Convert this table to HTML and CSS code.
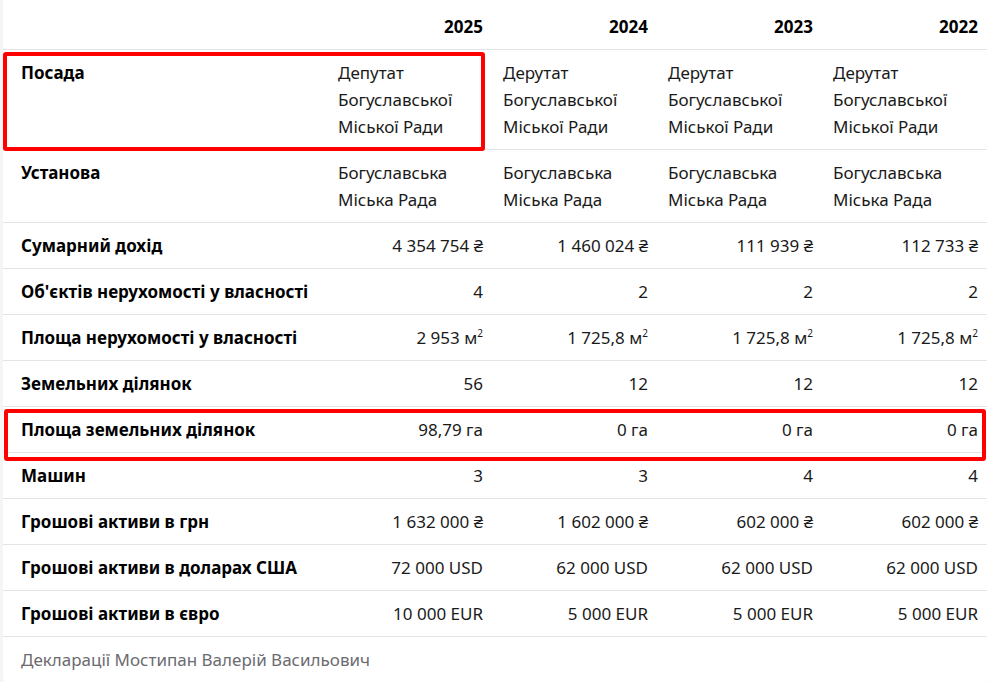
FILE: index.html
```html
<!DOCTYPE html>
<html lang="uk">
<head>
<meta charset="utf-8">
<title>Декларації</title>
<link rel="stylesheet" href="styles.css">
</head>
<body>
<div class="card">
  <table class="decl">
    <colgroup>
      <col class="c-label"><col class="c-val"><col class="c-val"><col class="c-val"><col class="c-val">
    </colgroup>
    <thead>
      <tr><th></th><th>2025</th><th>2024</th><th>2023</th><th>2022</th></tr>
    </thead>
    <tbody>
      <tr class="text-row"><th>Посада</th><td>Депутат Богуславської Міської Ради</td><td>Дерутат Богуславської Міської Ради</td><td>Дерутат Богуславської Міської Ради</td><td>Дерутат Богуславської Міської Ради</td></tr>
      <tr class="text-row"><th>Установа</th><td>Богуславська Міська Рада</td><td>Богуславська Міська Рада</td><td>Богуславська Міська Рада</td><td>Богуславська Міська Рада</td></tr>
      <tr><th>Сумарний дохід</th><td>4 354 754 ₴</td><td>1 460 024 ₴</td><td>111 939 ₴</td><td>112 733 ₴</td></tr>
      <tr><th>Об'єктів нерухомості у власності</th><td>4</td><td>2</td><td>2</td><td>2</td></tr>
      <tr><th>Площа нерухомості у власності</th><td>2 953 м<sup>2</sup></td><td>1 725,8 м<sup>2</sup></td><td>1 725,8 м<sup>2</sup></td><td>1 725,8 м<sup>2</sup></td></tr>
      <tr><th>Земельних ділянок</th><td>56</td><td>12</td><td>12</td><td>12</td></tr>
      <tr><th>Площа земельних ділянок</th><td>98,79 га</td><td>0 га</td><td>0 га</td><td>0 га</td></tr>
      <tr><th>Машин</th><td>3</td><td>3</td><td>4</td><td>4</td></tr>
      <tr><th>Грошові активи в грн</th><td>1 632 000 ₴</td><td>1 602 000 ₴</td><td>602 000 ₴</td><td>602 000 ₴</td></tr>
      <tr><th>Грошові активи в доларах США</th><td>72 000 USD</td><td>62 000 USD</td><td>62 000 USD</td><td>62 000 USD</td></tr>
      <tr><th>Грошові активи в євро</th><td>10 000 EUR</td><td>5 000 EUR</td><td>5 000 EUR</td><td>5 000 EUR</td></tr>
    </tbody>
  </table>
  <div class="caption">Декларації Мостипан Валерій Васильович</div>
</div>
<div class="mark mark-post"></div>
<div class="mark mark-land"></div>
</body>
</html>
```
FILE: styles.css
```css
html, body {
  margin: 0;
  padding: 0;
}
body {
  background: #f5f5f8;
  font-family: "Noto Sans", "Open Sans", sans-serif;
  font-size: 17px;
  color: #111;
  position: relative;
  height: 682px;
  overflow: hidden;
}
.card {
  margin-left: 3px;
  background: #fff;
  border-radius: 0 0 8px 8px;
  padding-bottom: 12px;
}
.decl {
  width: 984px;
  border-collapse: collapse;
  table-layout: fixed;
}
.c-label { width: 325px; }
.c-val { width: 165px; }
.decl th, .decl td {
  line-height: 27px;
  padding: 9px 10px;
  border-bottom: 1px solid #e3e3e8;
  vertical-align: top;
}
.decl thead th {
  padding: 13px 10px 9px;
  text-align: right;
  font-weight: 700;
  color: #000;
}
.decl tbody th {
  text-align: left;
  font-weight: 700;
  color: #000;
  padding-left: 18px;
}
.decl tbody td {
  text-align: right;
  color: #1a1a1a;
}
.decl tbody tr.text-row td {
  text-align: left;
}
.decl sup {
  font-size: 10px;
  line-height: 0;
  vertical-align: 7px;
}
.caption {
  padding: 9px 18px 0;
  line-height: 27px;
  color: #6b6b70;
}
.mark {
  position: absolute;
  border: 4px solid #ff0000;
  border-radius: 3px;
  box-sizing: border-box;
}
.mark-post {
  left: 3px;
  top: 52px;
  width: 482px;
  height: 99px;
}
.mark-land {
  left: 4px;
  top: 409px;
  width: 982px;
  height: 52px;
}
```
